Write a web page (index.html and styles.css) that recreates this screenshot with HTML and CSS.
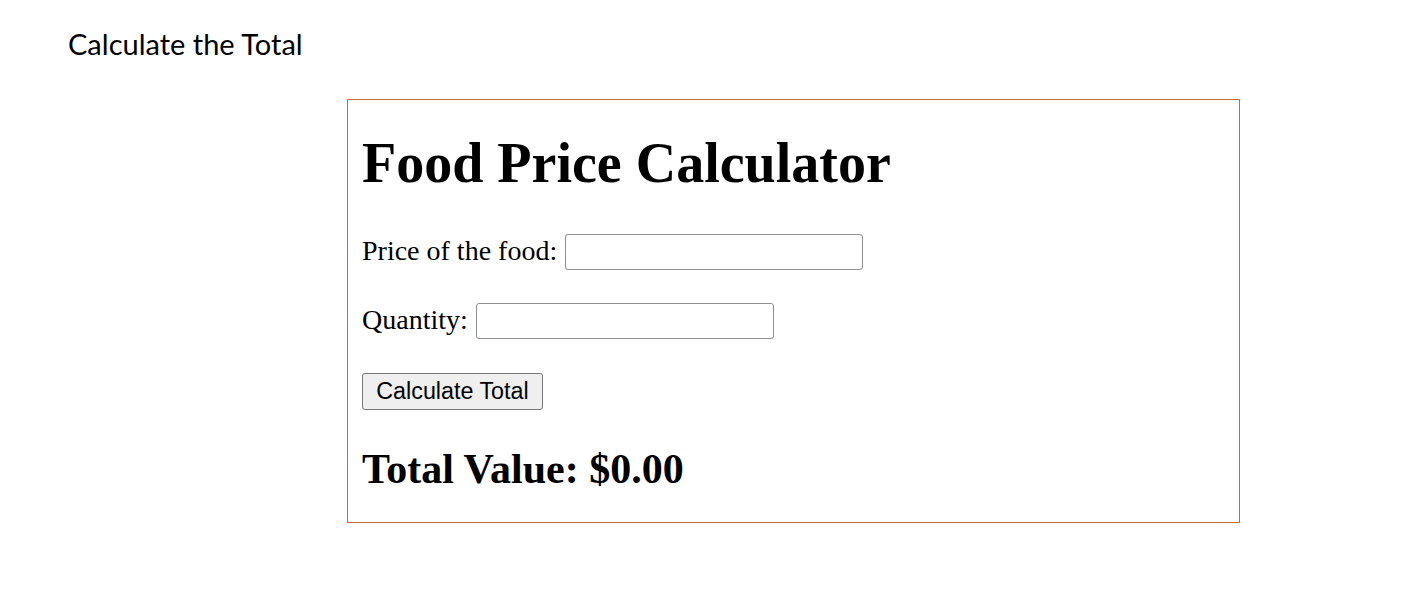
FILE: index.html
```html
<!DOCTYPE html>
<html>
<head>
<meta charset="utf-8">
<link rel="stylesheet" href="styles.css">
</head>
<body>
<p class="doc-title">Calculate the Total</p>
<div class="card">
  <h1 class="title">Food Price Calculator</h1>
  <div class="row">
    <label class="label" for="price">Price of the food:</label>
    <input class="field" id="price" type="text">
  </div>
  <div class="row row-qty">
    <label class="label" for="qty">Quantity:</label>
    <input class="field" id="qty" type="text">
  </div>
  <button class="btn" type="button">Calculate Total</button>
  <h2 class="total">Total Value: $0.00</h2>
</div>
</body>
</html>
```

FILE: styles.css
```css
html, body {
  margin: 0;
  padding: 0;
  background: #ffffff;
}
body {
  font-family: "Liberation Serif", "Times New Roman", serif;
  color: #000;
}
.doc-title {
  margin: 0;
  padding: 27px 0 0 68px;
  font-family: Lato, "Liberation Sans", sans-serif;
  font-size: 29px;
  line-height: 34px;
  color: #000;
}
.card {
  box-sizing: border-box;
  width: 893px;
  height: 424px;
  margin: 38px 0 0 347px;
  border: 1px solid #c8693a;
  padding: 0 14px;
  display: flex;
  flex-direction: column;
  align-items: flex-start;
}
.title {
  margin: 33px 0 0 0;
  font-size: 56px;
  line-height: 60px;
  font-weight: bold;
}
.row {
  margin-top: 41px;
  height: 36px;
  display: flex;
  align-items: center;
  gap: 8px;
}
.row-qty {
  margin-top: 33px;
}
.label {
  font-size: 28px;
  line-height: 32px;
  padding-bottom: 3px;
}
.field {
  box-sizing: border-box;
  width: 298px;
  height: 36px;
  margin: 0;
  border: 1px solid #8f8f8f;
  border-radius: 3px;
  background: #fff;
  font-size: 21px;
}
.btn {
  margin-top: 34px;
  box-sizing: border-box;
  width: 181px;
  height: 37px;
  padding: 0;
  border: 1px solid #767676;
  border-radius: 3px;
  background: #efefef;
  font-family: "Liberation Sans", Arial, sans-serif;
  font-size: 23.3px;
  color: #000;
}
.total {
  margin: 37px 0 0 0;
  font-size: 42px;
  line-height: 44px;
  font-weight: bold;
}
```
